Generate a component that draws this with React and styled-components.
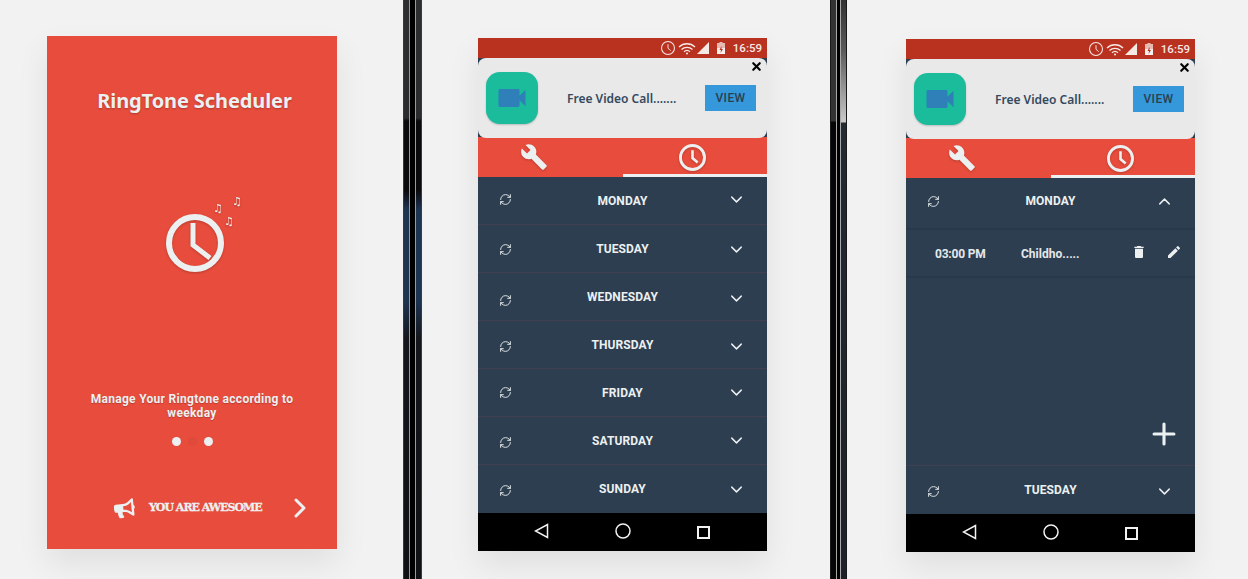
import React from 'react';
import styled, { createGlobalStyle } from 'styled-components';
import { ChevronDown, ChevronUp, ChevronRight, Plus, RefreshCw, X } from 'lucide-react';
import { MdBuild, MdDelete, MdEdit, MdVideocam } from 'react-icons/md';
import { FaBullhorn } from 'react-icons/fa';

const GlobalStyle = createGlobalStyle`
  html, body {
    margin: 0;
    padding: 0;
    background: #f2f2f2;
    overflow: hidden;
  }
`;

const Stage = styled.div`
  display: flex;
  align-items: flex-start;
  width: 1248px;
  height: 579px;
  padding-left: 47px;
  box-sizing: border-box;
  background: #f2f2f2;
  font-family: 'Noto Sans', sans-serif;
`;

const Welcome = styled.div`
  display: flex;
  flex-direction: column;
  align-items: center;
  box-sizing: border-box;
  width: 290px;
  height: 513px;
  margin-top: 36px;
  background: #e74c3c;
  box-shadow: 0 14px 30px rgba(0, 0, 0, 0.08);
  color: #ecf0f1;
`;

const Title = styled.h1`
  margin: 52px 0 0;
  padding-left: 5px;
  font-size: 20px;
  line-height: 26px;
  font-weight: 700;
  letter-spacing: -0.1px;
  text-shadow: 0 1px 2px rgba(0, 0, 0, 0.25);
`;

const Logo = styled.svg`
  display: block;
  margin-top: 76px;
  margin-left: 26px;
  filter: drop-shadow(0 1px 1px rgba(0, 0, 0, 0.2));
`;

const Tagline = styled.p`
  width: 240px;
  margin: 118px 0 0;
  text-align: center;
  font-size: 12px;
  line-height: 14px;
  font-weight: 700;
  font-family: Roboto, sans-serif;
  letter-spacing: 0.3px;
  text-shadow: 0 1px 1px rgba(0, 0, 0, 0.2);
`;

const Dots = styled.div`
  display: flex;
  gap: 7px;
  margin-top: 17px;
`;

const Dot = styled.span`
  width: 9px;
  height: 9px;
  border-radius: 50%;
  background: ${(p) => (p.$active ? '#e04a3a' : '#ecf0f1')};
`;

const Footer = styled.div`
  display: flex;
  align-items: center;
  width: 100%;
  box-sizing: border-box;
  margin-top: 46px;
  padding-left: 67px;
  svg {
    flex: none;
  }
`;

const Awesome = styled.span`
  margin-left: 14px;
  margin-right: 22px;
  font-family: 'DejaVu Serif', serif;
  font-size: 11px;
  line-height: 32px;
  font-weight: 700;
  letter-spacing: -1px;
  -webkit-text-stroke: 0.3px #ecf0f1;
  white-space: nowrap;
`;

const Divider = styled.div`
  flex: none;
  display: flex;
  height: 579px;
  margin-left: ${(p) => p.$left}px;
  margin-right: ${(p) => p.$right}px;
`;

const Edge = styled.span`
  width: 1px;
  background: ${(p) => p.$color};
`;

const Panel = styled.span`
  width: 5px;
  background: ${(p) => p.$fill};
`;

const Core = styled.span`
  width: ${(p) => p.$width}px;
  background: #000;
`;

const Phone = styled.div`
  flex: none;
  display: flex;
  flex-direction: column;
  width: 289px;
  height: 513px;
  margin-top: ${(p) => p.$top}px;
  background: #2c3e50;
  box-shadow: 0 14px 30px rgba(0, 0, 0, 0.08);
`;

const StatusBar = styled.div`
  flex: none;
  display: flex;
  align-items: center;
  justify-content: flex-end;
  gap: 3px;
  height: 20px;
  padding-right: 5px;
  background: #b93220;
  color: #f5e9e6;
`;

const StatusTime = styled.span`
  margin-left: 5px;
  font-family: Roboto, sans-serif;
  font-size: 11.5px;
  font-weight: 500;
`;

const Ad = styled.div`
  flex: none;
  position: relative;
  z-index: 1;
  display: flex;
  align-items: center;
  height: 80px;
  margin-bottom: -1px;
  padding: 0 11px 0 8px;
  box-sizing: border-box;
  background: #e9e9e9;
  border-radius: 8px;
`;

const AdIcon = styled.div`
  flex: none;
  display: flex;
  align-items: center;
  justify-content: center;
  width: 52px;
  height: 52px;
  border-radius: 14px;
  background: #1abc9c;
  color: #2f7fb8;
  box-shadow: 0 1px 2px rgba(0, 0, 0, 0.2);
`;

const AdText = styled.span`
  flex: 1;
  padding-left: 29px;
  font-size: 12px;
  font-weight: 600;
  color: #34495e;
  white-space: nowrap;
`;

const ViewButton = styled.span`
  flex: none;
  width: 51px;
  height: 26px;
  line-height: 26px;
  text-align: center;
  background: #3498db;
  color: #2c3e50;
  font-family: Roboto, sans-serif;
  font-size: 12px;
  font-weight: 500;
  letter-spacing: 0.4px;
`;

const CloseIcon = styled(X)`
  position: absolute;
  top: 2px;
  right: 4px;
  color: #000;
`;

const Tabs = styled.div`
  flex: none;
  display: grid;
  grid-template-columns: 1fr 1fr;
  height: 40px;
  background: #e74c3c;
`;

const Tab = styled.div`
  display: flex;
  align-items: center;
  justify-content: center;
  box-sizing: border-box;
  color: #ecf0f1;
  border-bottom: 3px solid ${(p) => (p.$active ? '#ecf0f1' : 'transparent')};
  padding: 3px ${(p) => p.$nudge}px 0 0;
  svg {
    filter: drop-shadow(0 1px 1px rgba(0, 0, 0, 0.2));
  }
`;

const Days = styled.div`
  flex: 1;
  min-height: 0;
  display: flex;
  flex-direction: column;
`;

const DayRow = styled.div`
  flex: none;
  display: grid;
  grid-template-columns: 56px 1fr 56px;
  align-items: center;
  box-sizing: border-box;
  height: 48px;
  color: #ecf0f1;
  border-bottom: 1px solid ${(p) => (p.$plain ? 'transparent' : '#41404f')};
  &:last-child {
    border-bottom: none;
  }
`;

const SyncCell = styled.span`
  display: flex;
  justify-content: center;
  padding-right: 1px;
  color: #dfe4e6;
  transform: translateY(${(p) => p.$shift}px);
`;

const DayName = styled.span`
  text-align: center;
  font-family: Roboto, sans-serif;
  font-size: 12px;
  font-weight: 700;
  letter-spacing: 0.1px;
`;

const ChevronCell = styled.span`
  display: flex;
  justify-content: center;
  padding-right: 5px;
  transform: translateY(${(p) => p.$shift}px);
`;

const OpenRow = styled(DayRow)`
  height: 52px;
  padding-bottom: 4px;
  border-bottom: 2px solid #2a3949;
`;

const EntryRow = styled.div`
  flex: none;
  display: flex;
  align-items: center;
  box-sizing: border-box;
  height: 48px;
  padding-top: 1px;
  color: #e4e8ea;
  border-bottom: 2px solid #2a3949;
  font-family: Roboto, sans-serif;
  font-size: 12px;
  font-weight: 700;
`;

const EntryTime = styled.span`
  width: 87px;
  padding-left: 29px;
  box-sizing: border-box;
  letter-spacing: -0.2px;
`;

const EntryName = styled.span`
  width: 112px;
  padding-left: 28px;
  box-sizing: border-box;
  white-space: nowrap;
`;

const EntryAction = styled.span`
  display: flex;
  width: ${(p) => p.$width}px;
  color: #ecf0f1;
  margin-left: ${(p) => p.$left}px;
  margin-top: -4px;
`;

const Spacer = styled.div`
  flex: 1;
  display: flex;
  justify-content: flex-end;
  align-items: flex-start;
  padding: 139px 14px 0 0;
  color: #ecf0f1;
  border-bottom: 1px solid #41404f;
`;

const NavBar = styled.div`
  flex: none;
  display: flex;
  align-items: center;
  gap: 66px;
  box-sizing: border-box;
  height: 38px;
  padding: 0 0 3px 56px;
  background: #000;
  color: #f2f2f2;
`;

const NavSquare = styled.svg`
  margin-top: 3px;
`;

const ClockGlyph = ({ size, stroke }) => (
  <svg width={size} height={size} viewBox="0 0 24 24" fill="none" stroke="currentColor" strokeWidth={stroke}>
    <circle cx="12" cy="12" r={12 - stroke / 2} />
    <path d="M12 5.500v7l4.600 3.900" strokeWidth={stroke * 0.9} />
  </svg>
);

const StatusIcons = () => (
  <>
    <ClockGlyph size={14} stroke={1.8} />
    <svg width="18" height="13" viewBox="0 0 18 13" fill="none" stroke="currentColor" strokeWidth="1.3">
      <path d="M1 5a11.500 11.500 0 0 1 16 0M3.500 7.500a8 8 0 0 1 11 0M6 9.800a4.400 4.400 0 0 1 6 0" />
      <circle cx="9" cy="11.600" r="1" fill="currentColor" stroke="none" />
    </svg>
    <svg width="12" height="12" viewBox="0 0 12 12" fill="currentColor" style={{ marginLeft: -2 }}>
      <path d="M12 0v12H0z" />
    </svg>
    <svg width="8" height="12" viewBox="0 0 8 12" style={{ marginLeft: 5 }}>
      <path d="M2.500 0h3v1H8v11H0V1h2.500z" fill="#e8b9b1" />
      <path d="M0 6h8v6H0z" fill="#f5f0ee" />
      <path d="M4.500 4 2.500 8h1.500l-.5 3 2.500-4H4.500z" fill="#b93220" />
    </svg>
    <StatusTime>16:59</StatusTime>
  </>
);

const PhoneTop = () => (
  <>
    <StatusBar>
      <StatusIcons />
    </StatusBar>
    <Ad>
      <AdIcon>
        <MdVideocam size={36} />
      </AdIcon>
      <AdText>Free Video Call.......</AdText>
      <ViewButton>VIEW</ViewButton>
      <CloseIcon size={13} strokeWidth={4} />
    </Ad>
    <Tabs>
      <Tab $nudge={32}>
        <MdBuild size={28} />
      </Tab>
      <Tab $active $nudge={5}>
        <ClockGlyph size={27} stroke={2.6} />
      </Tab>
    </Tabs>
  </>
);

const NavButtons = () => (
  <NavBar>
    <svg width="15" height="16" viewBox="0 0 15 16" fill="none" stroke="currentColor" strokeWidth="1.500">
      <path d="M13.500 1.500v13L1.500 8z" />
    </svg>
    <svg width="16" height="16" viewBox="0 0 16 16" fill="none" stroke="currentColor" strokeWidth="1.500">
      <circle cx="8" cy="8" r="7" />
    </svg>
    <NavSquare width="13" height="13" viewBox="0 0 13 13" fill="none" stroke="currentColor" strokeWidth="2">
      <path d="M1 1h11v11H1z" />
    </NavSquare>
  </NavBar>
);

const Sync = ({ shift }) => (
  <SyncCell $shift={shift}>
    <RefreshCw size={13} strokeWidth={1.8} />
  </SyncCell>
);

const Strips = ({ left, right, inner, outer, core, offsetLeft, offsetRight }) => (
  <Divider $left={offsetLeft} $right={offsetRight}>
    <Edge $color={outer} />
    <Panel $fill={left} />
    <Edge $color={inner} />
    <Core $width={core} />
    <Edge $color={inner} />
    <Panel $fill={right} />
    <Edge $color={outer} />
  </Divider>
);

const FIRST_PANEL =
  'linear-gradient(180deg, #2c2e30 0, #2a2c2e 118px, #0a0a0c 121px, #0a0a0c 190px, #1e3552 210px, #1e3552 300px, #14161c 340px, #101114 100%)';
const SECOND_LEFT = 'linear-gradient(180deg, #333 0, #333 121px, #050505 122px, #060606 100%)';
const SECOND_RIGHT =
  'linear-gradient(180deg, #333 0, #5a5a5a 50px, #cacaca 122px, #222a32 123px, #1d2228 100%)';

const DAYS = [
  { name: 'MONDAY', sync: -1, chevron: -1 },
  { name: 'TUESDAY', sync: 1, chevron: 1 },
  { name: 'WEDNESDAY', sync: 4, chevron: 2 },
  { name: 'THURSDAY', sync: 2, chevron: 2 },
  { name: 'FRIDAY', sync: 0, chevron: 0 },
  { name: 'SATURDAY', sync: 2, chevron: 0 },
  { name: 'SUNDAY', sync: 1, chevron: 0 },
];

const App = () => (
  <Stage>
    <GlobalStyle />
    <Welcome>
      <Title>RingTone Scheduler</Title>
      <Logo width="84" height="84" viewBox="0 0 84 84" fill="none">
        <circle cx="32" cy="53" r="26" stroke="#ecf0f1" strokeWidth="6" />
        <path d="M30 33v22l17 13" stroke="#ecf0f1" strokeWidth="5" />
        <text x="50" y="22" fontSize="11" fill="#ecf0f1" fontFamily="DejaVu Sans">♫</text>
        <text x="69" y="15" fontSize="11" fill="#ecf0f1" fontFamily="DejaVu Sans">♫</text>
        <text x="61" y="35" fontSize="11" fill="#ecf0f1" fontFamily="DejaVu Sans">♫</text>
      </Logo>
      <Tagline>Manage Your Ringtone according to weekday</Tagline>
      <Dots>
        <Dot />
        <Dot $active />
        <Dot />
      </Dots>
      <Footer>
        <FaBullhorn size={21} style={{ transform: 'rotate(-6deg)' }} />
        <Awesome>YOU ARE AWESOME</Awesome>
        <ChevronRight size={32} strokeWidth={2.2} />
      </Footer>
    </Welcome>

    <Strips
      left={FIRST_PANEL}
      right={FIRST_PANEL}
      inner="#9a9a9a"
      outer="#3a3a3a"
      core={5}
      offsetLeft={66}
      offsetRight={56}
    />

    <Phone $top={38}>
      <PhoneTop />
      <Days>
        {DAYS.map((day) => (
          <DayRow key={day.name}>
            <Sync shift={day.sync} />
            <DayName>{day.name}</DayName>
            <ChevronCell $shift={day.chevron}>
              <ChevronDown size={19} strokeWidth={1.8} />
            </ChevronCell>
          </DayRow>
        ))}
      </Days>
      <NavButtons />
    </Phone>

    <Strips
      left={SECOND_LEFT}
      right={SECOND_RIGHT}
      inner="#a8a8a8"
      outer="#1a1a1a"
      core={3}
      offsetLeft={63}
      offsetRight={59}
    />

    <Phone $top={39}>
      <PhoneTop />
      <Days>
        <OpenRow>
          <Sync shift={0} />
          <DayName>MONDAY</DayName>
          <ChevronCell $shift={0}>
            <ChevronUp size={19} strokeWidth={1.8} />
          </ChevronCell>
        </OpenRow>
        <EntryRow>
          <EntryTime>03:00 PM</EntryTime>
          <EntryName>Childho.....</EntryName>
          <EntryAction $width={26} $left={26}>
            <MdDelete size={16} />
          </EntryAction>
          <EntryAction $width={16} $left={9}>
            <MdEdit size={16} />
          </EntryAction>
        </EntryRow>
        <Spacer>
          <Plus size={34} strokeWidth={2.2} />
        </Spacer>
        <DayRow $plain>
          <Sync shift={1} />
          <DayName>TUESDAY</DayName>
          <ChevronCell $shift={1}>
            <ChevronDown size={19} strokeWidth={1.8} />
          </ChevronCell>
        </DayRow>
      </Days>
      <NavButtons />
    </Phone>
  </Stage>
);

export default App;
